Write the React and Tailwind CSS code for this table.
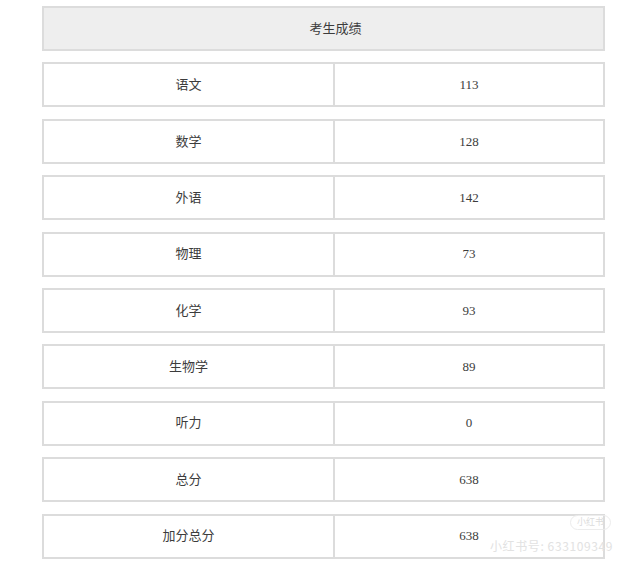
import React from 'react';

const rows = [
  { subject: '语文', score: '113' },
  { subject: '数学', score: '128' },
  { subject: '外语', score: '142' },
  { subject: '物理', score: '73' },
  { subject: '化学', score: '93' },
  { subject: '生物学', score: '89' },
  { subject: '听力', score: '0' },
  { subject: '总分', score: '638' },
  { subject: '加分总分', score: '638' },
];

const font = { fontFamily: '"Liberation Serif", "Noto Sans CJK SC", serif' };

export default function App() {
  return (
    <div className="relative w-[640px] h-[570px] bg-white text-[#3c3c3c] text-[13px]" style={font}>
      <div className="flex flex-col gap-[11.4px] pt-[6px] pl-[42px]">
        {/* Header */}
        <div className="w-[563px] h-[45px] bg-[#eeeeee] border-2 border-[#dcdcdc] flex items-center justify-center pl-[24px]">
          考生成绩
        </div>

        {/* Score rows */}
        {rows.map((r) => (
          <div key={r.subject} className="w-[563px] h-[45px] border-2 border-[#dcdcdc] flex">
            <div className="w-[291px] flex items-center justify-center border-r-2 border-[#dcdcdc]">
              {r.subject}
            </div>
            <div className="flex-1 flex items-center justify-center">{r.score}</div>
          </div>
        ))}
      </div>

      {/* Watermark */}
      <div className="absolute left-[570px] top-[515px] px-[6px] h-[15px] rounded-full border border-[#ececec] text-[9px] leading-[13px] text-[#dcdcdc]">
        小红书
      </div>
      <div className="absolute left-[490px] top-[537px] text-[12px] text-[#e2e2e2] tracking-[0.6px]" style={{ fontFamily: '"Noto Sans CJK SC", sans-serif' }}>
        小红书号: 633109349
      </div>
    </div>
  );
}
